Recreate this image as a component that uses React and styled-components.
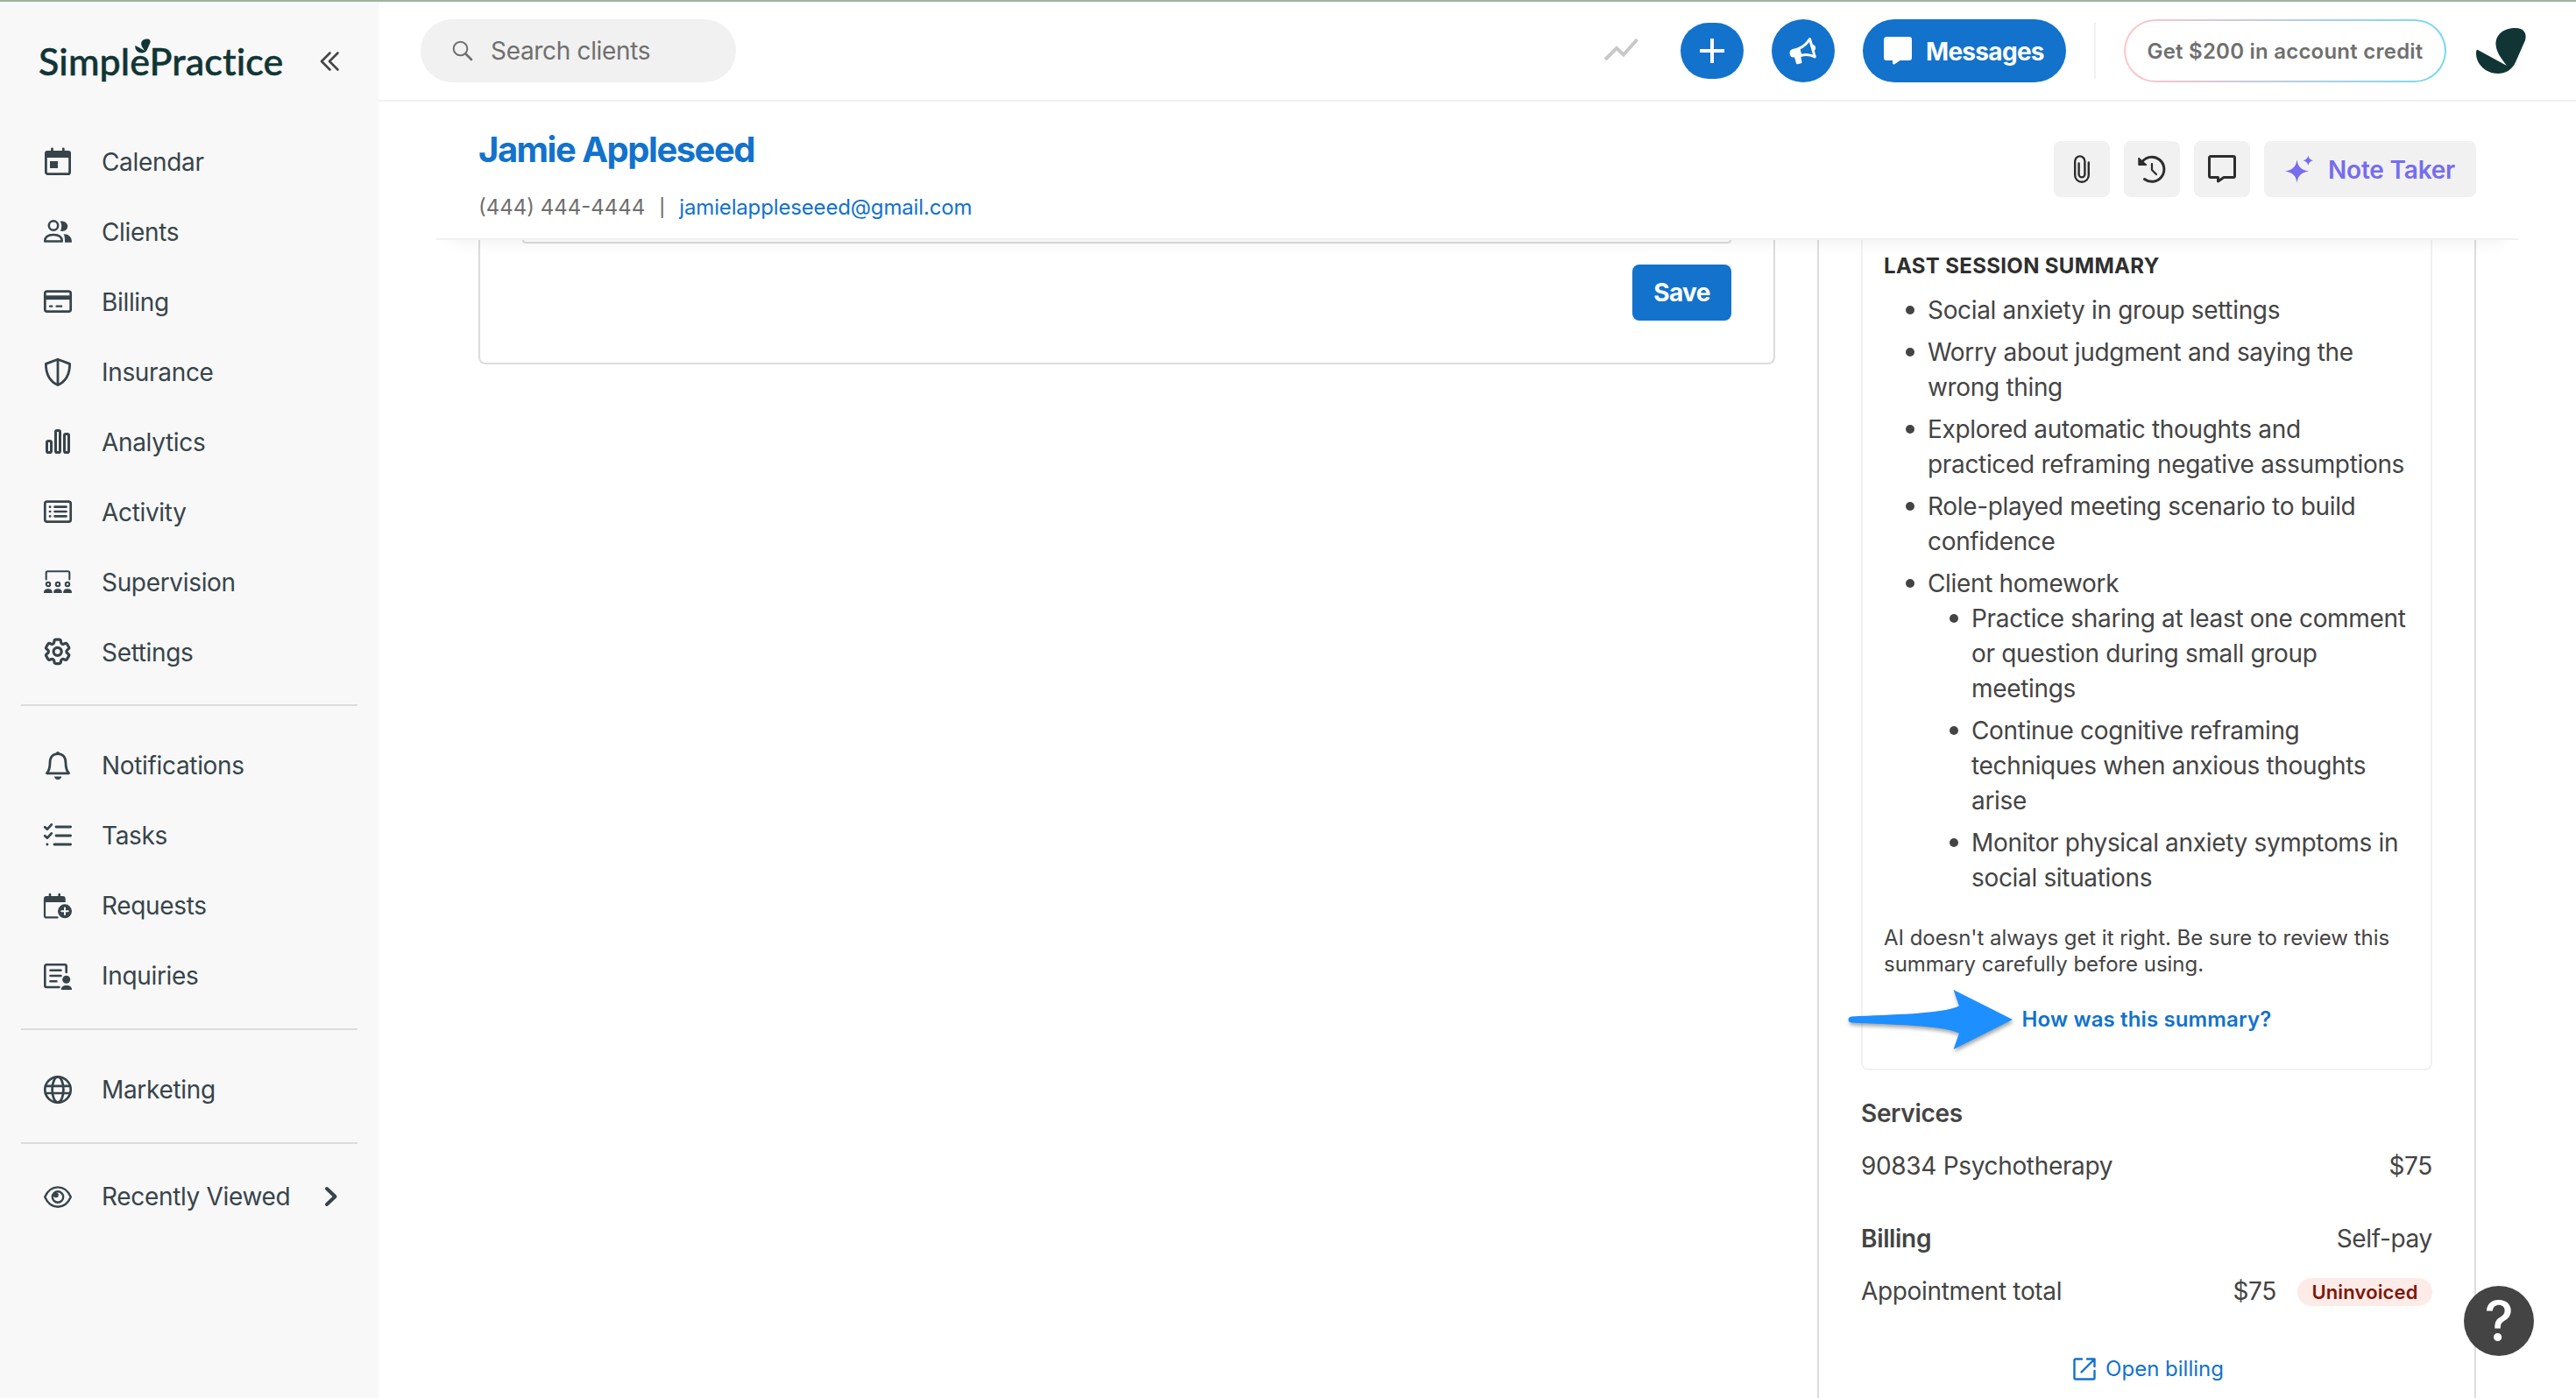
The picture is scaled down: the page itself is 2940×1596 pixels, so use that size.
import React, { Component } from 'react';
import styled, { createGlobalStyle } from 'styled-components';
import { HiOutlineCog6Tooth } from 'react-icons/hi2';

const GlobalStyle = createGlobalStyle`
  * {
    box-sizing: border-box;
  }
  body {
    margin: 0;
    overflow: hidden;
    background: #fff;
    color: #444;
    font-family: Inter, 'Open Sans', sans-serif;
    font-size: 28px;
    line-height: 40px;
    letter-spacing: -0.33px;
  }
  svg {
    display: block;
    flex-shrink: 0;
    overflow: visible;
  }
  ul, h1, h2, h3, p {
    margin: 0;
    padding: 0;
  }
  a {
    text-decoration: none;
  }
  button {
    border: 0;
    padding: 0;
    font-family: inherit;
  }
`

const Page = styled.div`
  display: flex;
  width: 2940px;
  height: 1596px;
  border-top: 2px solid #9fb39c;
  overflow: hidden;
`

/* sidebar */

const Sidebar = styled.aside`
  width: 432px;
  flex-shrink: 0;
  padding-top: 37px;
  background: #f8f8f8;
  color: #37444a;
`
const Brand = styled.div`
  display: flex;
  align-items: center;
  justify-content: space-between;
  height: 62px;
  margin-bottom: 44px;
  padding: 0 45px 0 44px;
`
const Wordmark = styled.div`
  position: relative;
  font-family: Lato, sans-serif;
  font-size: 43px;
  font-weight: 500;
  line-height: 60px;
  letter-spacing: 0.1px;
  color: #113535;
  -webkit-text-stroke: 0.5px #113535;
`
const WordmarkLeaf = styled.svg`
  position: absolute;
  left: 110px;
  top: 4px;
`
const NavItem = styled.div`
  display: flex;
  align-items: center;
  height: 80px;
  padding-left: 50px;
`
const NavLabel = styled.span`
  width: 254px;
  margin-left: 34px;
`
const NavDivider = styled.div`
  height: 2px;
  margin: ${props => props.first ? '19px' : '20px'} 24px ${props => props.last ? '20px' : '28px'};
  background: #dcdcdc;
`

/* top bar */

const Main = styled.main`
  flex: 1;
  display: flex;
  flex-direction: column;
`
const TopBar = styled.header`
  display: flex;
  align-items: center;
  height: 114px;
  flex-shrink: 0;
  padding: 0 56px 0 48px;
  border-bottom: 2px solid #f1f1f1;
`
const Search = styled.div`
  display: flex;
  align-items: center;
  width: 360px;
  height: 72px;
  margin-right: auto;
  padding-left: 36px;
  border-radius: 36px;
  background: #f1f1f1;
  color: #6f6f6f;
`
const SearchText = styled.span`
  margin-left: 20px;
`
const RoundButton = styled.button`
  display: flex;
  align-items: center;
  justify-content: center;
  width: 72px;
  height: ${props => props.height};
  margin-left: ${props => props.gap};
  border-radius: 36px;
  background: #1272cc;
  color: #fff;
`
const MessagesButton = styled.button`
  display: flex;
  align-items: center;
  width: 232px;
  height: 72px;
  margin-left: 32px;
  padding-left: 24px;
  border-radius: 36px;
  background: #1272cc;
  color: #fff;
  font-size: 28px;
  font-weight: 700;
`
const MessagesLabel = styled.span`
  margin-left: 16px;
  padding-top: 1px;
  letter-spacing: -0.7px;
`
const BarDivider = styled.div`
  width: 2px;
  height: 64px;
  margin: 0 32px;
  background: #f1f1f1;
`
const CreditButton = styled.button`
  width: 368px;
  height: 72px;
  margin-right: 33px;
  border: 2px solid transparent;
  border-radius: 36px;
  background: linear-gradient(#fff, #fff) padding-box, linear-gradient(90deg, #ffc5c9, #77d8f0) border-box;
  color: #6f6f6f;
  font-size: 24px;
  font-weight: 600;
  letter-spacing: 0.23px;
`

/* client header */

const ClientHeader = styled.section`
  position: relative;
  z-index: 1;
  display: flex;
  justify-content: space-between;
  height: 158px;
  flex-shrink: 0;
  margin: 0 66px;
  padding: 30px 48px 0;
  border-bottom: 2px solid #f1f1f1;
  background: #fff;
  box-shadow: 0 18px 18px -18px rgba(0, 0, 0, 0.08);
`
const ClientName = styled.h1`
  margin: 1px 0 26px;
  color: #1272cc;
  font-size: 40px;
  font-weight: 700;
  line-height: 48px;
  letter-spacing: -1.5px;
`
const Contact = styled.div`
  display: flex;
  color: #6f6f6f;
  font-size: 24px;
  line-height: 32px;
  letter-spacing: 0;
`
const Pipe = styled.span`
  margin: 0 16px;
  font-size: 20px;
  font-weight: 500;
`
const Link = styled.a`
  color: #1272cc;
  letter-spacing: -0.15px;
`
const Actions = styled.div`
  display: flex;
  gap: 16px;
  margin-top: 15px;
`
const ActionButton = styled.button`
  display: flex;
  align-items: center;
  justify-content: center;
  width: 64px;
  height: 64px;
  border-radius: 8px;
  background: #f1f1f1;
  color: #2d2d2d;
`
const NoteTaker = styled(ActionButton)`
  justify-content: flex-start;
  width: 242px;
  padding-left: 24px;
  color: #766cee;
  font-size: 28px;
  font-weight: 600;
`
const NoteTakerLabel = styled.span`
  margin-left: 17px;
  padding-top: 1px;
  letter-spacing: -0.2px;
`

/* content */

const Content = styled.div`
  display: flex;
  flex: 1;
  gap: 48px;
  padding: 0 114px;
`
const NoteCard = styled.section`
  width: 1480px;
  height: 142px;
  padding: 0 48px;
  border: 2px solid #dcdcdc;
  border-top: 0;
  border-radius: 0 0 8px 8px;
`
const NoteField = styled.div`
  height: 4px;
  border: 2px solid #dcdcdc;
  border-top: 0;
  border-radius: 0 0 8px 8px;
`
const SaveButton = styled.button`
  display: block;
  width: 113px;
  height: 64px;
  margin: 24px 0 0 auto;
  border-radius: 8px;
  background: #1272cc;
  color: #fff;
  font-size: 28px;
  font-weight: 700;
  letter-spacing: -0.7px;
`
const Panel = styled.section`
  width: 752px;
  padding: 0 48px;
  border: solid #dcdcdc;
  border-width: 0 2px;
`
const SummaryCard = styled.div`
  margin-bottom: 29px;
  padding: 14px 24px 40px;
  border: 2px solid #f1f1f1;
  border-top: 0;
  border-radius: 0 0 8px 8px;
`
const SummaryTitle = styled.h2`
  margin-bottom: 14px;
  color: #2f2f2f;
  font-size: 24px;
  font-weight: 700;
  line-height: 32px;
  letter-spacing: 0.33px;
`
const List = styled.ul`
  padding-left: 50px;
  list-style: none;
`
const ListItem = styled.li`
  margin-bottom: ${props => props.parent ? '0' : '8px'};

  &::before {
    content: '';
    float: left;
    width: 10px;
    height: 10px;
    margin: 15px 0 0 -25px;
    border-radius: 50%;
    background: #444;
  }
`
const Disclaimer = styled.p`
  margin-top: 34px;
  font-size: 24px;
  line-height: 30px;
  letter-spacing: -0.04px;
`
const Feedback = styled.div`
  position: relative;
  margin-top: 32px;
  text-align: center;
  color: #1272cc;
  font-size: 24px;
  font-weight: 600;
  line-height: 32px;
  letter-spacing: 0.13px;
`
const Arrow = styled.svg`
  position: absolute;
  left: -41px;
  top: -20px;
  filter: drop-shadow(1px 3px 2px rgba(0, 0, 0, 0.35));
`
const Row = styled.div`
  display: flex;
  justify-content: space-between;
  margin-bottom: ${props => props.gap};
`
const RowTitle = styled.h3`
  font-size: 28px;
  font-weight: 600;
  line-height: 40px;
`
const Amount = styled.div`
  display: flex;
  gap: 24px;
`
const Chip = styled.span`
  width: 154px;
  height: 32px;
  margin-top: 5px;
  border-radius: 16px;
  background: #fdebe8;
  color: #7c170c;
  text-align: center;
  font-size: 22px;
  font-weight: 600;
  line-height: 32px;
  letter-spacing: 0.15px;
`
const OpenBilling = styled.a`
  display: flex;
  align-items: center;
  justify-content: center;
  gap: 11px;
  padding-left: 4px;
  color: #1272cc;
  font-size: 24px;
  line-height: 32px;
  letter-spacing: 0;
`
const HelpButton = styled.button`
  position: absolute;
  left: 2812px;
  top: 1468px;
  z-index: 2;
  width: 80px;
  height: 80px;
  border-radius: 50%;
  background: #444;
  color: #fff;
  font-size: 63px;
  font-weight: 500;
  line-height: 80px;
`

const leaf = 'M3 26L36 44C29 35 24 28 23.5 20C23 8 33 1 46 1C55 1 59.5 7 57 15L46 40C42 49 34 53 26 53C12 53 1 42 1 30C1 26 2 25 3 26Z'
const bubble = 'M3 1.5H29A1.5 1.5 0 0 1 30.5 3V24A1.5 1.5 0 0 1 29 25.5H18L11.5 30V25.5H3A1.5 1.5 0 0 1 1.5 24V3A1.5 1.5 0 0 1 3 1.5Z'

const Svg = ({ w = 32, h = 32, sw = 3, children }) => (
  <svg width={w} height={h} viewBox={`0 0 ${w} ${h}`} fill="none" stroke="currentColor" strokeWidth={sw} strokeLinecap="round" strokeLinejoin="round">
    {children}
  </svg>
)
const Fill = props => <path fill="currentColor" stroke="none" {...props} />

const icons = {
  Calendar: (
    <Svg sw={2.8}>
      <rect x="2.4" y="5" width="27.2" height="24.6" rx="2.2" />
      <Fill d="M1 6a3 3 0 0 1 3-3h24a3 3 0 0 1 3 3v5H1zM7 15h9v8H7z" />
      <path d="M9.5 1V5M22.3 1V5" />
    </Svg>
  ),
  Clients: (
    <Svg sw={2.5}>
      <circle cx="11" cy="8.5" r="5.2" />
      <path d="M1.2 26.5C1.2 21.5 5 19 11 19S20.8 21.5 20.8 26.5Z" />
      <Fill d="M18.5 3.6C24 2.8 27.2 6 27.2 9.3C27.2 13 23.5 16 18.8 14.6C20.8 11 20.8 7 18.5 3.6ZM22.5 18.3C28.5 18.3 32 21.5 32 27.7H24C24 23 24 20.5 22.5 18.3Z" />
    </Svg>
  ),
  Billing: (
    <Svg sw={2.7}>
      <rect x="1.3" y="3.6" width="29.4" height="23" rx="2.4" />
      <path d="M2 10.7H30" strokeWidth="4.8" strokeLinecap="butt" />
      <path d="M7 20.7H9.4M14.5 20.7H20.2" strokeWidth="2.2" />
    </Svg>
  ),
  Insurance: (
    <Svg sw={2.8}>
      <path d="M16 1.2L29.6 6.4C29.6 18 26 26 16 30.6C6 26 2.4 18 2.4 6.4Z" />
      <path d="M16 2V30" />
    </Svg>
  ),
  Analytics: (
    <Svg sw={3}>
      <rect x="3.5" y="14.5" width="5" height="13" rx="1.6" />
      <rect x="13.5" y="2.5" width="5" height="25" rx="1.6" />
      <rect x="23.5" y="6.5" width="5" height="21" rx="1.6" />
    </Svg>
  ),
  Activity: (
    <Svg sw={2.7}>
      <rect x="1.3" y="3.6" width="29.4" height="23" rx="2.4" />
      <path d="M12.5 9.7H25.5M12.5 15H25.5M12.5 20.3H25.5M7 9.7H7.2M7 15H7.2M7 20.3H7.2" />
    </Svg>
  ),
  Supervision: (
    <Svg sw={2.1}>
      <path d="M2.7 12.5V5Q2.7 3.3 4.4 3.3H27.6Q29.3 3.3 29.3 5V12.5" />
      <circle cx="5" cy="18" r="2.2" />
      <circle cx="16" cy="18" r="2.2" />
      <circle cx="27" cy="18" r="2.2" />
      <Fill d="M0 28C0 24 2 23.2 5 23.2S9.6 24 9.8 28ZM11.2 28C11.2 24 13 23.2 16 23.2S20.8 24 20.8 28ZM22.2 28C22.2 24 24 23.2 27 23.2S32 24 32 28Z" />
    </Svg>
  ),
  Settings: <Svg sw={2.1}><HiOutlineCog6Tooth x="-2.6" y="-3.4" size={36.500} strokeWidth={2.1} /></Svg>,
  Notifications: (
    <Svg sw={2.8}>
      <path d="M3.4 24.8C6.5 21.5 7 18 7 13C7 6 10.5 2.6 16 2.6S25 6 25 13C25 18 25.5 21.5 28.6 24.8Z" />
      <Fill d="M14 2a2 2 0 0 1 4 0v1h-4zM12 28.4H20.2C20 30.5 18.5 32 16.1 32S12.2 30.5 12 28.4Z" />
    </Svg>
  ),
  Tasks: (
    <Svg sw={2.8}>
      <path d="M14 6H30.6M14 16H30.6M12 26H30.6M3.8 26H4" />
      <path d="M1.2 6.2L4 8.6L8.8 3.4M1.2 16.2L4 18.6L8.8 13.4" />
    </Svg>
  ),
  Requests: (
    <Svg sw={2.2}>
      <path d="M15.5 29.4H3A2 2 0 0 1 1 27.4V9" />
      <path d="M7 3V6M17.7 3V6" strokeWidth="2.6" />
      <Fill d="M0 12V8a3 3 0 0 1 3-3h18.7a3 3 0 0 1 3 3v4z" />
      <circle cx="24" cy="22.3" r="8" fill="currentColor" stroke="none" />
      <path d="M24 18.6V26M20.3 22.3H27.7" stroke="#f8f8f8" strokeWidth="2" />
    </Svg>
  ),
  Inquiries: (
    <Svg sw={2.6}>
      <path d="M17.5 29H3A1.7 1.7 0 0 1 1.3 27.3V5A1.7 1.7 0 0 1 3 3.3H24A1.7 1.7 0 0 1 25.7 5V12" />
      <path d="M7.5 9.7H19.5M7.5 16H19.5M7.5 22.3H14.5" />
      <circle cx="25.7" cy="20.3" r="4.5" fill="currentColor" stroke="none" />
      <Fill d="M19.7 32C19.7 28.5 22 27 25.9 27S32 28.5 32 32Z" />
    </Svg>
  ),
  Marketing: (
    <Svg sw={2.7}>
      <circle cx="16" cy="16" r="14.7" />
      <ellipse cx="16" cy="16" rx="6.4" ry="14.7" />
      <path d="M2 11.8H30M2 20H30" />
    </Svg>
  ),
  'Recently Viewed': (
    <Svg sw={2.4}>
      <path d="M1.2 16.5C4.5 9 10 5.4 16 5.4S27.500 9 30.8 16.5C27.5 24 22 27.7 16 27.7S4.5 24 1.2 16.5Z" />
      <circle cx="16" cy="16.5" r="6.2" />
      <circle cx="13.8" cy="14.3" r="3" fill="currentColor" stroke="none" />
    </Svg>
  )
}

class SideNav extends Component {
  renderItem(name) {
    return (
      <NavItem key={name}>
        {icons[name]}
        <NavLabel>{name}</NavLabel>
        {name === 'Recently Viewed' ?
          <Svg w={16} h={24} sw={4}><path d="M3 3L12.5 12L3 21" /></Svg> : null}
      </NavItem>
    )
  }

  render() {
    return (
      <Sidebar>
        <Brand>
          <Wordmark>
            SimplePractice
            <WordmarkLeaf width="18" height="17" viewBox="0 0 59 54"><path d={leaf} fill="#113535" /></WordmarkLeaf>
          </Wordmark>
          <Svg w={22} h={22} sw={2.6}><path d="M11.5 1.5L2 11L11.5 20.5M20.5 1.5L11 11L20.5 20.5" stroke="#444" /></Svg>
        </Brand>
        {['Calendar', 'Clients', 'Billing', 'Insurance', 'Analytics', 'Activity', 'Supervision', 'Settings'].map(this.renderItem)}
        <NavDivider first />
        {['Notifications', 'Tasks', 'Requests', 'Inquiries'].map(this.renderItem)}
        <NavDivider />
        {this.renderItem('Marketing')}
        <NavDivider last />
        {this.renderItem('Recently Viewed')}
      </Sidebar>
    )
  }
}

const Toolbar = () => (
  <TopBar>
    <Search>
      <Svg w={24} h={24} sw={2}><circle cx="9.5" cy="9.5" r="7.8" /><path d="M15.5 15.5L22 22" strokeWidth="2.6" /></Svg>
      <SearchText>Search clients</SearchText>
    </Search>
    <svg width="40" height="36" fill="none" stroke="#c8c8c8" strokeWidth="4">
      <path d="M2 28L15 15L23 22.5L38.5 5" />
    </svg>
    <RoundButton height="64px" gap="48px">
      <svg width="28" height="28" stroke="currentColor" strokeWidth="4"><path d="M14 0V28M0 14H28" /></svg>
    </RoundButton>
    <RoundButton height="72px" gap="32px">
      <Svg sw={3}>
        <path d="M23.5 2.5L29.3 23C24 20.3 18.5 20 13 21.5L10.8 13.5C16 11.5 20.5 7.5 23.5 2.5Z" />
        <Fill d="M12 12L4 14C1 15 -.2 17.5 1 20.5C1.5 23 3.5 24 6 23.2L8 30.3Q8.3 31.5 9.5 31.3L13.6 30.3Q14.8 30 14.5 28.8L13 21.5ZM26.5 8.5C30.5 9.5 31.5 14 28.5 16.2Z" />
      </Svg>
    </RoundButton>
    <MessagesButton>
      <Svg><path d={bubble} fill="currentColor" /></Svg>
      <MessagesLabel>Messages</MessagesLabel>
    </MessagesButton>
    <BarDivider />
    <CreditButton>Get $200 in account credit</CreditButton>
    <svg width="59" height="54"><path d={leaf} fill="#113535" /></svg>
  </TopBar>
)

const ClientBar = () => (
  <ClientHeader>
    <div>
      <ClientName>Jamie Appleseed</ClientName>
      <Contact>
        (444) 444-4444<Pipe>|</Pipe><Link>jamielappleseeed@gmail.com</Link>
      </Contact>
    </div>
    <Actions>
      <ActionButton>
        <Svg w={18} sw={2.4}><path d="M16.8 8.5V23A7.8 7.8 0 0 1 1.2 23V7A5.6 5.6 0 0 1 12.4 7V22A3.4 3.4 0 0 1 5.6 22V9.5" /></Svg>
      </ActionButton>
      <ActionButton>
        <Svg>
          <path d="M5 7.5A14 14 0 1 1 7.5 27.5" />
          <path d="M16 10V17L21 22" strokeWidth="2.2" />
          <path d="M1 3.5V11.3H9.5Z" fill="currentColor" strokeWidth="1.5" />
        </Svg>
      </ActionButton>
      <ActionButton>
        <Svg><path d={bubble} /></Svg>
      </ActionButton>
      <NoteTaker>
        <Svg>
          <Fill d="M13.5 5.5C15 13 17 16.5 27 18.5C17 20.5 15 24 13.5 31.5C12 24 10 20.5 0 18.5C10 16.5 12 13 13.5 5.5ZM26.3 .5C27 3.8 28.5 5.5 32 6.2C28.5 7 27 8.5 26.3 12C25.6 8.5 24 7 20.6 6.2C24 5.5 25.6 3.8 26.3 .5Z" />
        </Svg>
        <NoteTakerLabel>Note Taker</NoteTakerLabel>
      </NoteTaker>
    </Actions>
  </ClientHeader>
)

const topics = [
  'Social anxiety in group settings',
  'Worry about judgment and saying the wrong thing',
  'Explored automatic thoughts and practiced reframing negative assumptions',
  'Role-played meeting scenario to build confidence'
]
const homework = [
  'Practice sharing at least one comment or question during small group meetings',
  'Continue cognitive reframing techniques when anxious thoughts arise',
  'Monitor physical anxiety symptoms in social situations'
]

const Summary = () => (
  <SummaryCard>
    <SummaryTitle>LAST SESSION SUMMARY</SummaryTitle>
    <List>
      {topics.map(topic => <ListItem key={topic}>{topic}</ListItem>)}
      <ListItem parent>
        Client homework
        <List>
          {homework.map(task => <ListItem key={task}>{task}</ListItem>)}
        </List>
      </ListItem>
    </List>
    <Disclaimer>AI doesn't always get it right. Be sure to review this summary carefully before using.</Disclaimer>
    <Feedback>
      How was this summary?
      <Arrow width="190" height="72" viewBox="0 0 190 72">
        <path d="M4 32.5C50 30 105 30 127 20.5L120.5 2L188 36L120.5 70L127 51.5C105 42 50 42 4 39.5Q.5 39 .5 36T4 32.5Z" fill="#1e8fff" />
      </Arrow>
    </Feedback>
  </SummaryCard>
)

class App extends Component {
  render() {
    return (
      <Page>
        <GlobalStyle />
        <SideNav />
        <Main>
          <Toolbar />
          <ClientBar />
          <Content>
            <NoteCard>
              <NoteField />
              <SaveButton>Save</SaveButton>
            </NoteCard>
            <Panel>
              <Summary />
              <Row gap="20px"><RowTitle>Services</RowTitle></Row>
              <Row gap="43px"><span>90834 Psychotherapy</span><span>$75</span></Row>
              <Row gap="20px"><RowTitle>Billing</RowTitle><span>Self-pay</span></Row>
              <Row gap="53px">
                <span>Appointment total</span>
                <Amount>
                  <span>$75</span>
                  <Chip>Uninvoiced</Chip>
                </Amount>
              </Row>
              <OpenBilling>
                <Svg w={26} h={26} sw={2.4}>
                  <path d="M10 1.5H3A1.5 1.5 0 0 0 1.5 3V23A1.5 1.5 0 0 0 3 24.5H23A1.5 1.5 0 0 0 24.5 23V15M16 1.5H24.5V10M24 2L9.5 16.5" />
                </Svg>
                Open billing
              </OpenBilling>
            </Panel>
          </Content>
        </Main>
        <HelpButton>?</HelpButton>
      </Page>
    )
  }
}

export default App;
